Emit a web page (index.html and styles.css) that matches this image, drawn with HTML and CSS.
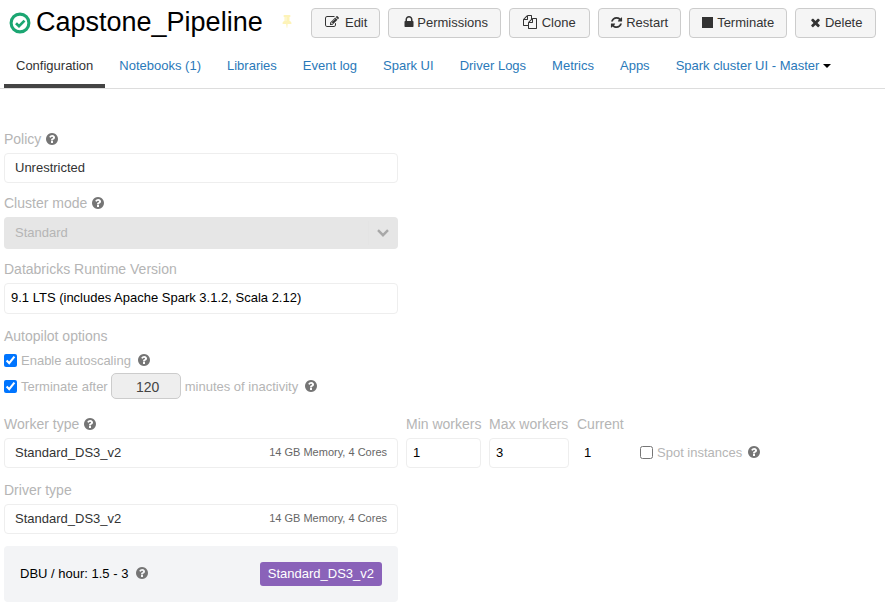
FILE: index.html
```html
<!DOCTYPE html>
<html lang="en">
<head>
    <meta charset="UTF-8">
    <meta name="viewport" content="width=device-width, initial-scale=1.0">
    <title>Capstone_Pipeline</title>
    <link rel="stylesheet" href="styles.css">
</head>
<body>
    <svg class="icon-defs" aria-hidden="true">
        <symbol id="i-help" viewBox="0 0 1792 1792"><path d="M1024 1376v-192q0-14-9-23t-23-9h-192q-14 0-23 9t-9 23v192q0 14 9 23t23 9h192q14 0 23-9t9-23zm256-672q0-88-55.5-163t-138.5-116-170-41q-243 0-371 213-15 24 8 42l132 100q7 6 19 6 16 0 25-12 53-68 86-92 34-24 86-24 48 0 85.5 26t37.5 59q0 38-20 61t-68 45q-63 28-115.5 86.5t-52.5 125.5v36q0 14 9 23t23 9h192q14 0 23-9t9-23q0-19 21.5-49.5t54.5-49.5q32-18 49-28.5t46-35 44.5-48 28-60.5 12.5-81zm384 192q0 209-103 385.5t-279.5 279.5-385.5 103-385.5-103-279.5-279.5-103-385.5 103-385.5 279.5-279.5 385.5-103 385.5 103 279.5 279.5 103 385.5z"/></symbol>
        <symbol id="i-edit" viewBox="0 0 1792 1792"><path d="M888 1184l116-116-152-152-116 116v56h96v96h56zm440-720q-16-16-33 1l-350 350q-17 17-1 33t33-1l350-350q17-17 1-33zm80 594v190q0 119-84.5 203.5t-203.5 84.5h-832q-119 0-203.5-84.5t-84.5-203.5v-832q0-119 84.5-203.5t203.5-84.5h832q63 0 117 25 15 7 18 23 3 17-9 29l-49 49q-14 14-32 8-23-6-45-6h-832q-66 0-113 47t-47 113v832q0 66 47 113t113 47h832q66 0 113-47t47-113v-126q0-13 9-22l64-64q15-15 35-7t20 29zm-96-738l288 288-672 672h-288v-288zm444 132l-92 92-288-288 92-92q28-28 68-28t68 28l152 152q28 28 28 68t-28 68z"/></symbol>
        <symbol id="i-lock" viewBox="0 0 1792 1792"><path d="M640 768h512v-192q0-106-75-181t-181-75-181 75-75 181v192zm832 96v576q0 40-28 68t-68 28h-960q-40 0-68-28t-28-68v-576q0-40 28-68t68-28h32v-192q0-184 132-316t316-132 316 132 132 316v192h32q40 0 68 28t28 68z"/></symbol>
        <symbol id="i-clone" viewBox="0 0 1792 1792"><path d="M1696 384q40 0 68 28t28 68v1216q0 40-28 68t-68 28h-960q-40 0-68-28t-28-68v-288h-544q-40 0-68-28t-28-68v-672q0-40 20-88t48-76l408-408q28-28 76-48t88-20h416q40 0 68 28t28 68v328q68-40 128-40h416zm-544 213l-299 299h299v-299zm-640-384l-299 299h299v-299zm196 647l316-316v-416h-384v416q0 40-28 68t-68 28h-416v640h512v-256q0-40 20-88t48-76zm956 804v-1152h-384v416q0 40-28 68t-68 28h-416v640h896z"/></symbol>
        <symbol id="i-refresh" viewBox="0 0 1792 1792"><path d="M1639 1056q0 5-1 7-64 268-268 434.5t-478 166.5q-146 0-282.5-55t-243.5-157l-129 129q-19 19-45 19t-45-19-19-45v-448q0-26 19-45t45-19h448q26 0 45 19t19 45-19 45l-137 137q71 66 161 102t187 36q134 0 250-65t186-179q11-17 53-117 8-23 30-23h192q13 0 22.5 9.5t9.5 22.5zm25-800v448q0 26-19 45t-45 19h-448q-26 0-45-19t-19-45 19-45l138-138q-148-137-349-137-134 0-250 65t-186 179q-11 17-53 117-8 23-30 23h-199q-13 0-22.5-9.5t-9.5-22.5v-7q65-268 270-434.5t480-166.5q146 0 284 55.5t245 156.5l130-129q19-19 45-19t45 19 19 45z"/></symbol>
        <symbol id="i-times" viewBox="0 0 1792 1792"><path d="M1490 1322q0 40-28 68l-136 136q-28 28-68 28t-68-28l-294-294-294 294q-28 28-68 28t-68-28l-136-136q-28-28-28-68t28-68l294-294-294-294q-28-28-28-68t28-68l136-136q28-28 68-28t68 28l294 294 294-294q28-28 68-28t68 28l136 136q28 28 28 68t-28 68l-294 294 294 294q28 28 28 68z"/></symbol>
        <symbol id="i-pin" viewBox="0 0 1792 1792"><path d="M800 864v-448q0-14-9-23t-23-9-23 9-9 23v448q0 14 9 23t23 9 23-9 9-23zm672 352q0 26-19 45t-45 19h-429l-51 483q-2 12-10.5 20.5t-20.5 8.5h-1q-27 0-32-27l-76-485h-404q-26 0-45-19t-19-45q0-123 78.5-221.5t177.5-98.5v-512q-52 0-90-38t-38-90 38-90 90-38h640q52 0 90 38t38 90-38 90-90 38v512q99 0 177.5 98.5t78.5 221.5z"/></symbol>
    </svg>

    <header class="title-bar">
        <svg class="status-icon" viewBox="0 0 22 22" aria-hidden="true">
            <circle cx="11" cy="11" r="8.9" fill="none" stroke="#1ba672" stroke-width="3.1"/>
            <path d="M7 11.2l3 3 5.5-5.6" fill="none" stroke="#1ba672" stroke-width="2.7"/>
        </svg>
        <h1 class="cluster-name">Capstone_Pipeline</h1>
        <svg class="pin-icon"><use href="#i-pin"/></svg>
        <div class="actions">
            <button class="btn btn-edit"><svg class="btn-icon"><use href="#i-edit"/></svg>Edit</button>
            <button class="btn btn-perm"><svg class="btn-icon"><use href="#i-lock"/></svg>Permissions</button>
            <button class="btn btn-clone"><svg class="btn-icon"><use href="#i-clone"/></svg>Clone</button>
            <button class="btn btn-restart"><svg class="btn-icon"><use href="#i-refresh"/></svg>Restart</button>
            <button class="btn btn-term"><span class="stop-square"></span>Terminate</button>
            <button class="btn btn-del"><svg class="btn-icon"><use href="#i-times"/></svg>Delete</button>
        </div>
    </header>

    <nav class="tabs">
        <a class="tab active" href="#">Configuration</a>
        <a class="tab" href="#">Notebooks (1)</a>
        <a class="tab" href="#">Libraries</a>
        <a class="tab" href="#">Event log</a>
        <a class="tab" href="#">Spark UI</a>
        <a class="tab" href="#">Driver Logs</a>
        <a class="tab" href="#">Metrics</a>
        <a class="tab" href="#">Apps</a>
        <a class="tab" href="#">Spark cluster UI - Master<span class="caret"></span></a>
    </nav>

    <main class="config">
        <div class="label lbl-policy">Policy <svg class="help"><use href="#i-help"/></svg></div>
        <div class="field">Unrestricted</div>

        <div class="label lbl-mode">Cluster mode <svg class="help"><use href="#i-help"/></svg></div>
        <div class="select-disabled">
            <span>Standard</span>
            <div class="select-arrow">
                <svg class="chevron" viewBox="0 0 12 8" aria-hidden="true"><path d="M1 1.2L6 6.2l5-5" fill="none" stroke="#a8a8a8" stroke-width="2.4"/></svg>
            </div>
        </div>

        <div class="label lbl-runtime">Databricks Runtime Version</div>
        <div class="field field-runtime">9.1 LTS (includes Apache Spark 3.1.2, Scala 2.12)</div>

        <div class="label lbl-auto">Autopilot options</div>
        <label class="check-row row-scale">
            <input type="checkbox" checked>
            <span>Enable autoscaling</span>
            <svg class="help"><use href="#i-help"/></svg>
        </label>
        <label class="check-row row-term">
            <input type="checkbox" checked>
            <span>Terminate after</span>
            <span class="minutes">120</span>
            <span>minutes of inactivity</span>
            <svg class="help"><use href="#i-help"/></svg>
        </label>

        <div class="worker-grid">
            <div class="label">Worker type <svg class="help"><use href="#i-help"/></svg></div>
            <div class="label">Min workers</div>
            <div class="label">Max workers</div>
            <div class="label">Current</div>
            <div></div>
            <div class="field node-field"><span>Standard_DS3_v2</span><small>14 GB Memory, 4 Cores</small></div>
            <div class="field num-field">1</div>
            <div class="field num-field">3</div>
            <div class="current-val">1</div>
            <label class="spot">
                <input type="checkbox">
                <span>Spot instances</span>
                <svg class="help"><use href="#i-help"/></svg>
            </label>
        </div>

        <div class="label lbl-driver">Driver type</div>
        <div class="field node-field"><span>Standard_DS3_v2</span><small>14 GB Memory, 4 Cores</small></div>

        <div class="dbu-box">
            <span class="dbu-text">DBU / hour: 1.5 - 3 <svg class="help"><use href="#i-help"/></svg></span>
            <span class="badge">Standard_DS3_v2</span>
        </div>
    </main>
</body>
</html>
```
FILE: styles.css
```css
body {
    font-family: "Liberation Sans", Arial, sans-serif;
    font-size: 13px;
    margin: 0;
    background-color: #fff;
    color: #333;
    overflow: hidden;
}

.icon-defs {
    display: none;
}

/* Title row */
.title-bar {
    display: flex;
    align-items: flex-start;
    height: 46px;
    padding: 8px 9px 0 9px;
    box-sizing: border-box;
}

.status-icon {
    width: 22px;
    height: 22px;
    margin-top: 4px;
    flex: none;
}

.cluster-name {
    margin: -1px 0 0 5px;
    font-size: 27px;
    font-weight: normal;
    line-height: 30px;
    color: #000;
    white-space: nowrap;
}

.pin-icon {
    width: 14px;
    height: 14px;
    margin: 6px 0 0 17px;
    fill: #fdf3b8;
    flex: none;
}

.actions {
    display: flex;
    gap: 8px;
    margin-left: 17px;
}

.btn {
    display: flex;
    align-items: center;
    justify-content: center;
    height: 30px;
    padding: 0 0 2px 0;
    border: 1px solid #ccc;
    border-radius: 4px;
    background-color: #f5f5f5;
    color: #333;
    font-family: inherit;
    font-size: 13px;
}

.btn-edit { width: 69px; padding-left: 2px; }
.btn-perm { width: 113px; padding-left: 2px; }
.btn-clone { width: 81px; }
.btn-restart { width: 83px; }
.btn-term { width: 98px; padding-left: 1px; }
.btn-del { width: 81px; padding-left: 1px; }

.btn-icon {
    width: 13px;
    height: 13px;
    margin-right: 3px;
    fill: #333;
}

.btn-edit .btn-icon {
    width: 14px;
    height: 14px;
    margin-right: 6px;
}

.btn-clone .btn-icon {
    width: 14px;
    height: 14px;
    margin-right: 5px;
}

.btn-perm .btn-icon {
    width: 14px;
    height: 14px;
    margin-right: 1px;
}

.stop-square {
    width: 11px;
    height: 11px;
    margin-right: 4px;
    background-color: #333;
}

/* Tabs */
.tabs {
    display: flex;
    height: 42px;
    padding-left: 4px;
    border-bottom: 1px solid #ddd;
}

.tab {
    padding: 12px 13px 0 13px;
    line-height: 15px;
    color: #2a79b9;
    text-decoration: none;
    white-space: nowrap;
}

.tab.active {
    padding-left: 12px;
    padding-right: 12px;
    margin-right: 1px;
    color: #333;
    border-bottom: 4px solid #444;
    height: 26px;
}

.caret {
    display: inline-block;
    margin-left: 4px;
    vertical-align: 2px;
    border-top: 4px solid #000;
    border-left: 4px solid transparent;
    border-right: 4px solid transparent;
}

/* Form */
.config {
    padding: 0 4px;
}

.label {
    font-size: 14px;
    line-height: 16px;
    color: #b5b5b5;
    white-space: nowrap;
}

.help {
    width: 14px;
    height: 14px;
    vertical-align: -2px;
    fill: #757575;
}

.lbl-policy { margin-top: 42px; margin-bottom: 6px; }
.lbl-mode { margin-top: 12px; margin-bottom: 6px; }
.lbl-runtime { margin-top: 12px; margin-bottom: 6px; }
.lbl-auto { margin-top: 14px; margin-bottom: 7px; }
.lbl-driver { margin-top: 14px; margin-bottom: 6px; }

.field {
    display: flex;
    align-items: center;
    width: 394px;
    height: 30px;
    padding: 0 10px 2px 10px;
    box-sizing: border-box;
    border: 1px solid #eee;
    border-radius: 4px;
    color: #333;
}

.field-runtime {
    height: 31px;
    padding-left: 6px;
    color: #000;
}

.select-disabled {
    display: flex;
    align-items: center;
    justify-content: space-between;
    width: 394px;
    height: 32px;
    padding: 0 0 0 11px;
    box-sizing: border-box;
    border-radius: 4px;
    background-color: #e6e6e6;
    color: #b5b5b5;
}

.select-disabled span {
    margin-bottom: 2px;
}

.select-arrow {
    display: flex;
    align-items: center;
    height: 24px;
    padding: 0 9px 0 8px;
    border-left: 1px solid #e4e4e4;
}

.chevron {
    width: 12px;
    height: 8px;
}

.check-row {
    display: flex;
    align-items: center;
    color: #b5b5b5;
}

.check-row input, .spot input {
    width: 13px;
    height: 13px;
    margin: 0 4px 0 0;
    flex: none;
}

.row-scale {
    height: 18px;
}

.row-scale .help {
    margin-left: 6px;
}

.row-term {
    height: 26px;
    margin-top: 4px;
}

.row-term .help {
    margin-left: 6px;
}

.minutes {
    width: 70px;
    height: 26px;
    margin: 0 4px 0 3px;
    padding-left: 4px;
    box-sizing: border-box;
    border: 1px solid #ccc;
    border-radius: 5px;
    background-color: #eee;
    color: #444;
    font-size: 14px;
    line-height: 26px;
    text-align: center;
}

.worker-grid {
    display: grid;
    grid-template-columns: 394px 75px 80px 55px auto;
    grid-template-rows: 16px 30px;
    column-gap: 8px;
    row-gap: 6px;
    margin-top: 17px;
}

.num-field {
    width: auto;
    padding: 0 6px 2px 6px;
    color: #000;
}

.current-val {
    align-self: center;
    padding: 0 0 2px 7px;
    color: #000;
}

.spot {
    display: flex;
    align-items: center;
    padding-bottom: 2px;
    color: #b5b5b5;
}

.spot .help {
    margin-left: 5px;
}

.node-field {
    justify-content: space-between;
}

.node-field small {
    font-size: 11px;
    color: #666;
}

.dbu-box {
    display: flex;
    align-items: center;
    justify-content: space-between;
    width: 394px;
    height: 56px;
    margin-top: 12px;
    padding: 0 16px;
    box-sizing: border-box;
    border-radius: 4px;
    background-color: #f3f4f6;
}

.dbu-text {
    margin-bottom: 2px;
    color: #000;
}

.dbu-text .help {
    margin-left: 3px;
}

.badge {
    padding: 0 8px;
    height: 24px;
    line-height: 24px;
    border-radius: 3px;
    background-color: #8a62b9;
    color: #fff;
}
```
